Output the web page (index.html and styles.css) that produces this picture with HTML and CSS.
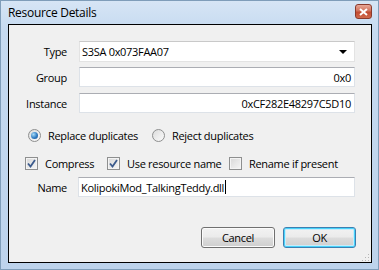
FILE: index.html
```html
<!DOCTYPE html>
<html lang="en">
<head>
    <meta charset="UTF-8">
    <title>Resource Details</title>
    <link rel="stylesheet" href="styles.css">
</head>
<body>

<div class="window">
    <div class="titlebar">
        <span class="title">Resource Details</span>
        <div class="close-btn">
            <svg width="9" height="8" viewBox="0 0 9 8">
                <path d="M1 1 L8 7 M8 1 L1 7" stroke="#fff" stroke-width="2" fill="none"/>
            </svg>
        </div>
    </div>

    <div class="client">
        <div class="field-row">
            <label>Type</label>
            <div class="combo">
                <span>S3SA 0x073FAA07</span>
                <span class="arrow"></span>
            </div>
        </div>
        <div class="field-row row-group">
            <label>Group</label>
            <div class="textbox right">0x0</div>
        </div>
        <div class="field-row row-instance">
            <label>Instance</label>
            <div class="textbox right">0xCF282E48297C5D10</div>
        </div>

        <div class="radio-row">
            <div class="option opt-replace">
                <span class="radio checked"></span>
                <span>Replace duplicates</span>
            </div>
            <div class="option">
                <span class="radio"></span>
                <span>Reject duplicates</span>
            </div>
        </div>

        <div class="check-row">
            <div class="option opt-compress">
                <span class="checkbox"><svg width="9" height="9" viewBox="0 0 9 9"><path d="M1 4.5 L3.5 7.5 L8 1" stroke="#3b5a8c" stroke-width="1.8" fill="none"/></svg></span>
                <span>Compress</span>
            </div>
            <div class="option opt-usename">
                <span class="checkbox"><svg width="9" height="9" viewBox="0 0 9 9"><path d="M1 4.5 L3.5 7.5 L8 1" stroke="#3b5a8c" stroke-width="1.8" fill="none"/></svg></span>
                <span>Use resource name</span>
            </div>
            <div class="option">
                <span class="checkbox"></span>
                <span>Rename if present</span>
            </div>
        </div>

        <div class="field-row row-name">
            <label>Name</label>
            <div class="textbox">KolipokiMod_TalkingTeddy.dll<span class="caret"></span></div>
        </div>

        <div class="buttons">
            <div class="button">Cancel</div>
            <div class="button default">OK</div>
        </div>

        <svg class="grip" width="9" height="9" viewBox="0 0 9 9">
            <rect x="7" y="1" width="1" height="1" fill="#b5b5b5"/>
            <rect x="4" y="4" width="1" height="1" fill="#b5b5b5"/>
            <rect x="7" y="4" width="1" height="1" fill="#b5b5b5"/>
            <rect x="1" y="7" width="1" height="1" fill="#b5b5b5"/>
            <rect x="4" y="7" width="1" height="1" fill="#b5b5b5"/>
            <rect x="7" y="7" width="1" height="1" fill="#b5b5b5"/>
        </svg>
    </div>
</div>

</body>
</html>
```

FILE: styles.css
```css
* {
    margin: 0;
    padding: 0;
    box-sizing: border-box;
}

body {
    width: 379px;
    height: 270px;
    overflow: hidden;
    font-family: "Open Sans", "Noto Sans", sans-serif;
    font-size: 11px;
    letter-spacing: -0.3px;
    color: #000;
    background-color: #fff;
}

.window {
    width: 379px;
    height: 270px;
    display: flex;
    flex-direction: column;
    padding: 0 6px 6px 7px;
    border: 1px solid #7f9db9;
    background: linear-gradient(180deg, #d6e5f5 0%, #c6daf0 30px, #bdd3ec 100%);
}

.titlebar {
    height: 23px;
    display: flex;
    align-items: center;
    justify-content: space-between;
    flex-shrink: 0;
}

.title {
    font-size: 12px;
    letter-spacing: -0.3px;
    margin-top: -1px;
}

.close-btn {
    width: 17px;
    height: 15px;
    margin-top: -2px;
    border: 1px solid #8a3a2c;
    border-radius: 3px;
    background: linear-gradient(180deg, #e9a898 0%, #d0725c 45%, #c14a30 55%, #d06a4c 100%);
    display: flex;
    align-items: center;
    justify-content: center;
}

.client {
    flex: 1;
    position: relative;
    border: 1px solid #000;
    background-color: #f0f0f0;
    padding: 16px 16px 14px 0;
    display: flex;
    flex-direction: column;
}

.field-row {
    display: grid;
    grid-template-columns: 58px 1fr;
    column-gap: 12px;
    align-items: center;
}

.field-row label {
    text-align: right;
}

.row-group {
    margin-top: 5px;
}

.row-instance {
    margin-top: 6px;
}

.row-name {
    margin-top: 6px;
    column-gap: 11px;
}

.combo, .textbox {
    height: 20px;
    background-color: #fff;
    border: 1px solid #dde2e8;
    border-top-color: #abadb3;
    padding: 0 3px 0 2px;
    display: flex;
    align-items: center;
    white-space: nowrap;
}

.combo {
    height: 21px;
    justify-content: space-between;
    border-color: #e3e3e3;
    border-top-color: #c9c9c9;
}

.combo .arrow {
    width: 0;
    height: 0;
    margin-right: 4px;
    border-left: 4px solid transparent;
    border-right: 4px solid transparent;
    border-top: 4px solid #000;
}

.textbox.right {
    justify-content: flex-end;
}

.caret {
    display: inline-block;
    width: 1px;
    height: 14px;
    background-color: #000;
    margin-left: 1px;
}

.radio-row, .check-row {
    display: flex;
    align-items: center;
    height: 16px;
}

.radio-row {
    margin-top: 14px;
    padding-left: 19px;
}

.check-row {
    margin-top: 12px;
    padding-left: 16px;
}

.option {
    display: flex;
    align-items: center;
    gap: 7px;
    white-space: nowrap;
}

.opt-replace {
    width: 124px;
}

.opt-compress {
    width: 82px;
}

.opt-usename {
    width: 122px;
}

.radio {
    width: 13px;
    height: 13px;
    border-radius: 50%;
    border: 1px solid #8e8f8f;
    background: linear-gradient(135deg, #dcdcdc, #fbfbfb);
    display: flex;
    align-items: center;
    justify-content: center;
}

.radio.checked::after {
    content: "";
    width: 7px;
    height: 7px;
    border-radius: 50%;
    background: radial-gradient(circle at 35% 35%, #a8dcf8 0%, #2f7bc2 55%, #1d4f8c 100%);
}

.checkbox {
    width: 13px;
    height: 13px;
    border: 1px solid #8e8f8f;
    background: linear-gradient(135deg, #d8d8d8, #f6f6f6);
    box-shadow: inset 0 0 0 1px #f4f4f4;
    display: flex;
    align-items: center;
    justify-content: center;
}

.buttons {
    margin-top: auto;
    display: flex;
    justify-content: flex-end;
    gap: 8px;
    margin-right: -1px;
}

.button {
    width: 74px;
    height: 21px;
    border: 1px solid #707070;
    border-radius: 3px;
    background: linear-gradient(180deg, #f2f2f2 0%, #ebebeb 49%, #dddddd 51%, #cfcfcf 100%);
    box-shadow: inset 0 0 0 1px #fbfbfb;
    display: flex;
    align-items: center;
    justify-content: center;
}

.button.default {
    width: 73px;
    border-color: #3c7fb1;
    box-shadow: inset 0 0 0 1px #48d3fb, inset 0 0 0 2px #c7ecfb;
}

.grip {
    position: absolute;
    right: 1px;
    bottom: 0;
}
```
